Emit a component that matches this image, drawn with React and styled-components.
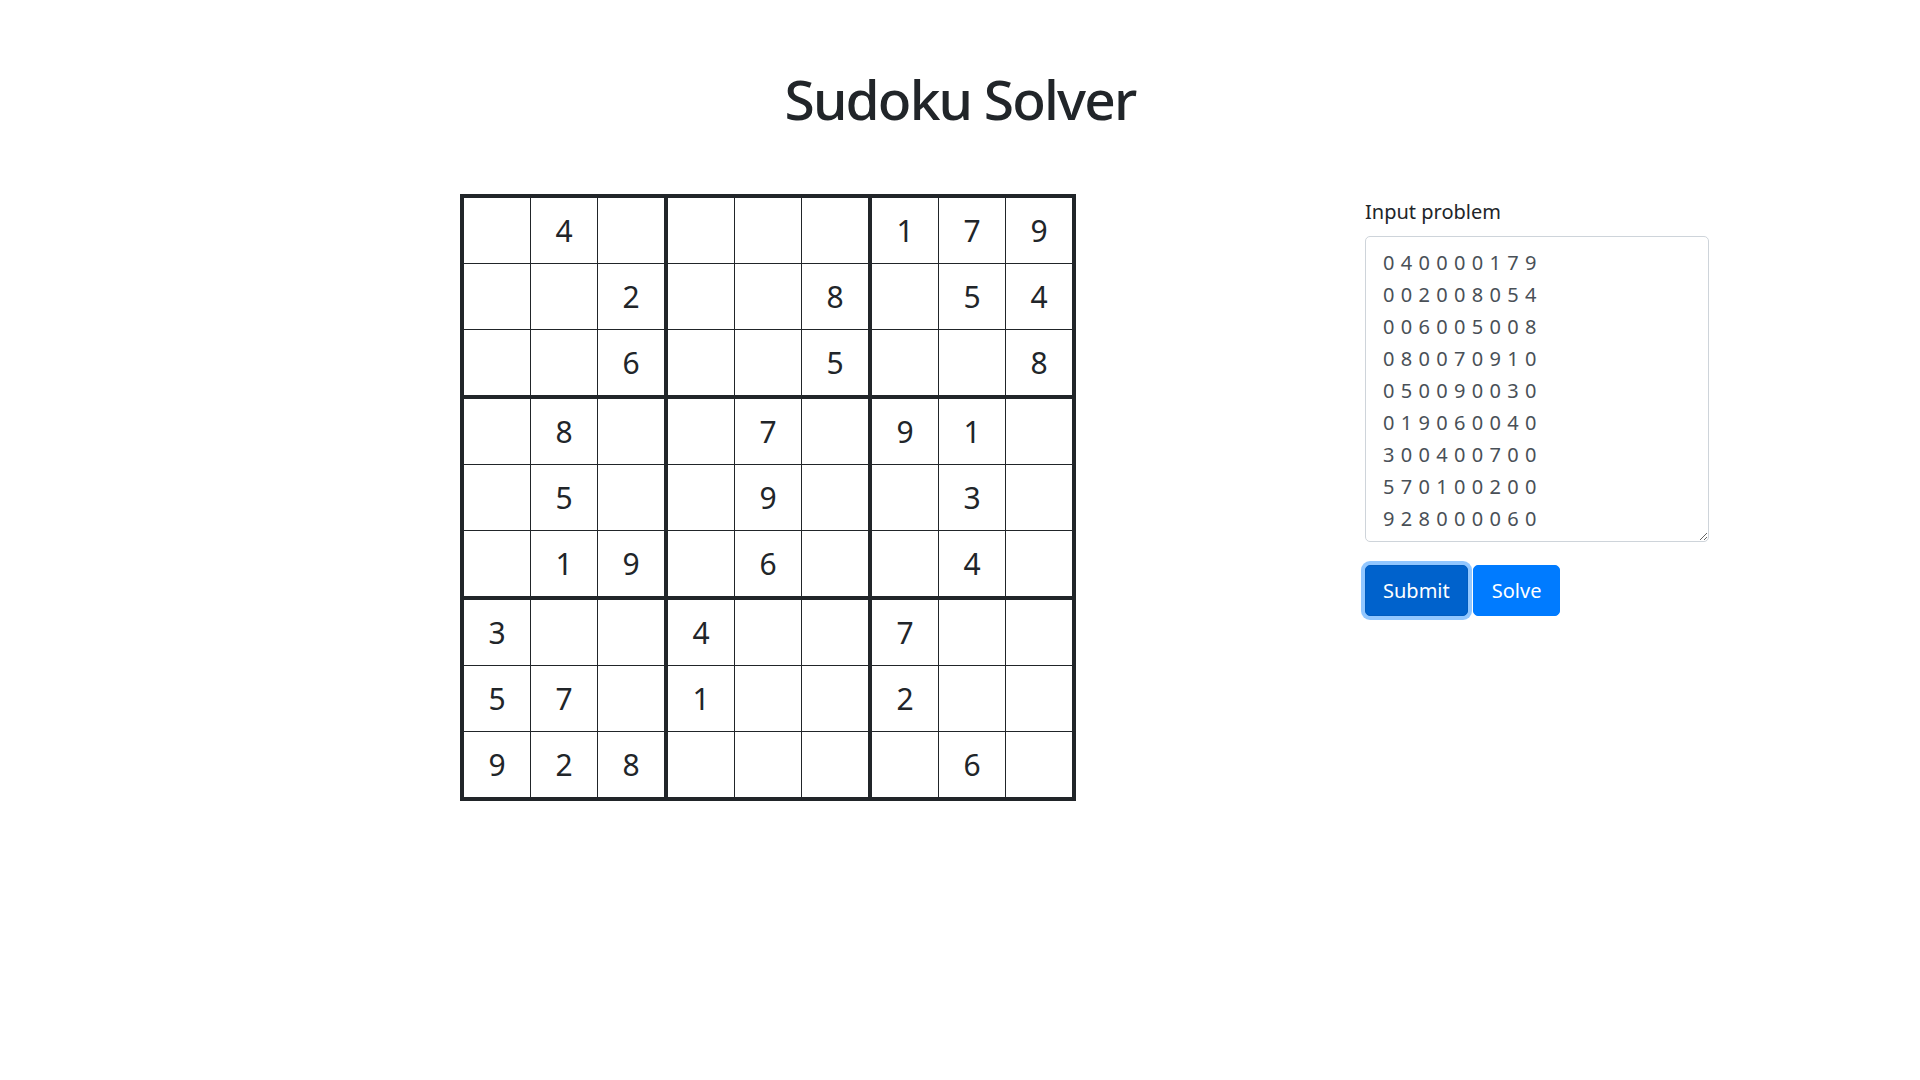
import React, { useState } from 'react';
import styled, { createGlobalStyle } from 'styled-components';

const GlobalStyle = createGlobalStyle`
  body {
    margin: 0;
    background: #fff;
    color: #212529;
    font-family: "Noto Sans", "Open Sans", sans-serif;
  }
`;

const PageContainer = styled.div`
  width: 1920px;
`;

const PageTitle = styled.h1`
  margin: 66px 0 0;
  font-size: 55px;
  line-height: 1.2;
  font-weight: 500;
  text-align: center;
  letter-spacing: -1.8px;
  color: #212529;
`;

const MainRow = styled.div`
  display: flex;
  align-items: flex-start;
  margin-top: 62px;
  padding-left: 460px;
`;

const Board = styled.div`
  display: grid;
  grid-template-columns: repeat(3, auto);
  gap: 4px;
  padding: 4px;
  background-color: #212529;
`;

const Box = styled.div`
  display: grid;
  grid-template-columns: repeat(3, 66px);
  grid-auto-rows: 65px;
  gap: 1px;
  background-color: #212529;
`;

const Cell = styled.div`
  display: flex;
  align-items: center;
  justify-content: center;
  background-color: #fff;
  font-size: 30px;
  color: #212529;
`;

const Panel = styled.div`
  display: flex;
  flex-direction: column;
  align-items: flex-start;
  margin-left: 289px;
  margin-top: 3px;
`;

const Label = styled.label`
  font-size: 20px;
  line-height: 30px;
  margin-bottom: 9px;
  color: #212529;
`;

const Textarea = styled.textarea`
  box-sizing: border-box;
  width: 344px;
  height: 306px;
  padding: 10px 17px 6px;
  border: 1px solid #ced4da;
  border-radius: 5px;
  font-family: "Noto Sans", "Open Sans", sans-serif;
  font-size: 20px;
  line-height: 32px;
  letter-spacing: 0.55px;
  color: #495057;
  background: #fff;
  outline: none;
`;

const ButtonRow = styled.div`
  display: flex;
  gap: 5px;
  margin-top: 23px;
`;

const Button = styled.button`
  height: 51px;
  padding: 0 ${(p) => p.$px}px;
  border: 1px solid ${(p) => (p.$active ? '#005cbf' : '#007bff')};
  border-radius: 5px;
  background-color: ${(p) => (p.$active ? '#0062cc' : '#007bff')};
  color: #fff;
  font-family: "Noto Sans", "Open Sans", sans-serif;
  font-size: 20px;
  cursor: pointer;
  box-shadow: ${(p) => (p.$active ? '0 0 0 4px rgba(38, 143, 255, 0.5)' : 'none')};
`;

const puzzle = [
  '040000179',
  '002008054',
  '006005008',
  '080070910',
  '050090030',
  '019060040',
  '300400700',
  '570100200',
  '928000060',
];

const App = () => {
  const [text, setText] = useState(puzzle.map((r) => r.split('').join(' ')).join('\n'));

  const boxes = [];
  for (let b = 0; b < 9; b++) {
    const br = Math.floor(b / 3) * 3;
    const bc = (b % 3) * 3;
    const cells = [];
    for (let r = 0; r < 3; r++) {
      for (let c = 0; c < 3; c++) {
        const v = puzzle[br + r][bc + c];
        cells.push(<Cell key={`${r}-${c}`}>{v === '0' ? '' : v}</Cell>);
      }
    }
    boxes.push(<Box key={b}>{cells}</Box>);
  }

  return (
    <PageContainer>
      <GlobalStyle />
      <PageTitle>Sudoku Solver</PageTitle>
      <MainRow>
        <Board>{boxes}</Board>
        <Panel>
          <Label htmlFor="problem">Input problem</Label>
          <Textarea id="problem" value={text} onChange={(e) => setText(e.target.value)} />
          <ButtonRow>
            <Button $active $px={17} type="button">Submit</Button>
            <Button $px={18} type="button">Solve</Button>
          </ButtonRow>
        </Panel>
      </MainRow>
    </PageContainer>
  );
};

export default App;
